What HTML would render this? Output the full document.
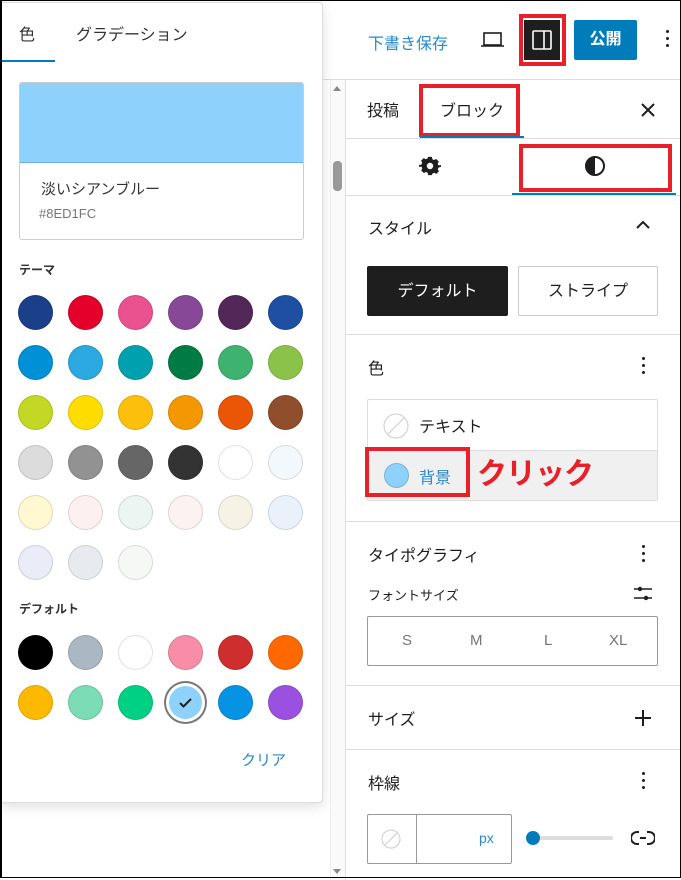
<!DOCTYPE html>
<html><head><meta charset="utf-8">
<style>
*{box-sizing:border-box;margin:0;padding:0}
body{width:681px;height:880px;position:relative;overflow:hidden;background:#fff;font-family:"Liberation Sans","Noto Sans CJK JP",sans-serif;color:#1e1e1e}
.a{position:absolute}
.c{position:absolute;width:35px;height:35px;border-radius:50%;box-shadow:inset 0 0 0 1px rgba(0,0,0,.12)}
.hr{position:absolute;left:346px;width:334px;height:1px;background:#ddd}
.red{position:absolute;border:4px solid #e8202a}
.dots{position:absolute;width:4px}
.dots i{display:block;width:3px;height:3px;background:#1e1e1e;border-radius:50%;margin-bottom:4px}
</style></head><body>
<div class="a" style="left:0;top:0;width:681px;height:878px;border:1px solid #000;border-left:2px solid #000;z-index:50"></div>
<div class="a" style="left:0;top:80px;width:330px;height:800px;background:#fff"></div>
<div class="a" style="left:330px;top:80px;width:16px;height:800px;background:#fafafa;border-left:1px solid #eee;border-right:1px solid #ddd"></div>
<div class="a" style="left:333px;top:86px;width:0;height:0;border-left:4px solid transparent;border-right:4px solid transparent;border-bottom:5px solid #888"></div>
<div class="a" style="left:333px;top:161px;width:9px;height:30px;background:#999;border-radius:4px"></div>
<div class="a" style="left:333px;top:869px;width:0;height:0;border-left:4px solid transparent;border-right:4px solid transparent;border-top:5px solid #888"></div>
<div class="a" style="left:323px;top:79px;width:358px;height:1px;background:#ddd"></div>
<div class="a" style="left:368px;top:30px;font-size:16px;color:#2a8ac8">下書き保存</div>
<svg class="a" style="left:480px;top:29px" width="26" height="22" viewBox="0 0 26 22"><rect x="4" y="4" width="17" height="12" fill="none" stroke="#1e1e1e" stroke-width="1.6"/><line x1="1" y1="17" x2="24" y2="17" stroke="#1e1e1e" stroke-width="1.6"/></svg>
<div class="a" style="left:524px;top:20px;width:36px;height:40px;background:#1e1e1e"></div>
<svg class="a" style="left:531px;top:29px" width="22" height="22" viewBox="0 0 22 22"><rect x="2" y="2" width="18" height="18" fill="none" stroke="#fff" stroke-width="1.6" rx="1"/><line x1="13" y1="2" x2="13" y2="20" stroke="#fff" stroke-width="1.6"/></svg>
<div class="red" style="left:519px;top:14px;width:47px;height:52px"></div>
<div class="a" style="left:574px;top:20px;width:63px;height:40px;background:#007cba;border-radius:2px;color:#fff;font-size:16px;font-weight:bold;text-align:center;line-height:40px">公開</div>
<div class="dots" style="left:666px;top:30px"><i></i><i></i><i></i></div>
<div class="a" style="left:367px;top:97px;font-size:16px">投稿</div>
<div class="a" style="left:440px;top:97px;font-size:16px">ブロック</div>
<div class="red" style="left:419px;top:84px;width:101px;height:53px"></div>
<div class="a" style="left:420px;top:136px;width:104px;height:2px;background:#007cba"></div>
<svg class="a" style="left:640px;top:102px" width="16" height="16" viewBox="0 0 16 16"><path d="M2 2L14 14M14 2L2 14" stroke="#1e1e1e" stroke-width="2"/></svg>
<div class="hr" style="top:138px"></div>
<svg class="a" style="left:419px;top:155px" width="22" height="22" viewBox="0 0 24 24"><path fill="#1e1e1e" d="M10 2h4l.6 2.6 1.8.9 2.4-1.2 2.8 2.8-1.2 2.4.9 1.8L24 11v2l-2.6.6-.9 1.8 1.2 2.4-2.8 2.8-2.4-1.2-1.8.9L14 22h-4l-.6-2.6-1.8-.9-2.4 1.200-2.8-2.8 1.2-2.4-.9-1.8L0 13v-2l2.6-.6.9-1.8-1.2-2.4 2.8-2.8 2.4 1.2 1.8-.9z M12 8.5a3.5 3.5 0 1 0 0 7a3.5 3.5 0 1 0 0-7z" fill-rule="evenodd"/></svg>
<svg class="a" style="left:584px;top:155px" width="22" height="22" viewBox="0 0 22 22"><circle cx="11" cy="11" r="9" fill="none" stroke="#1e1e1e" stroke-width="2"/><path d="M11 2a9 9 0 0 0 0 18z" fill="#1e1e1e"/></svg>
<div class="red" style="left:519px;top:144px;width:153px;height:48px"></div>
<div class="a" style="left:512px;top:193px;width:164px;height:2px;background:#007cba"></div>
<div class="hr" style="top:195px"></div>
<div class="a" style="left:368px;top:215px;font-size:16px">スタイル</div>
<svg class="a" style="left:635px;top:219px" width="16" height="12" viewBox="0 0 16 12"><path d="M2 9L8 3L14 9" fill="none" stroke="#1e1e1e" stroke-width="2"/></svg>
<div class="a" style="left:367px;top:266px;width:141px;height:50px;background:#1e1e1e;border-radius:2px;color:#fff;font-size:16px;text-align:center;line-height:52px">デフォルト</div>
<div class="a" style="left:518px;top:266px;width:140px;height:50px;border:1px solid #ccc;border-radius:2px;font-size:16px;text-align:center;line-height:50px">ストライプ</div>
<div class="hr" style="top:334px"></div>
<div class="a" style="left:368px;top:355px;font-size:16px">色</div>
<div class="dots" style="left:642px;top:357px"><i></i><i></i><i></i></div>
<div class="a" style="left:367px;top:399px;width:291px;height:102px;border:1px solid #ddd;border-radius:2px"></div>
<div class="a" style="left:368px;top:450px;width:289px;height:50px;background:#f0f0f0;border-top:1px solid #ddd"></div>
<svg class="a" style="left:383px;top:413px" width="26" height="26" viewBox="0 0 26 26"><circle cx="13" cy="13" r="12" fill="#fff" stroke="#ccc"/><line x1="5" y1="21" x2="21" y2="5" stroke="#ccc"/></svg>
<div class="a" style="left:419px;top:413px;font-size:16px">テキスト</div>
<div class="a" style="left:384px;top:463px;width:25px;height:25px;border-radius:50%;background:#8ed1fc;box-shadow:inset 0 0 0 1px rgba(0,0,0,.15)"></div>
<div class="a" style="left:419px;top:464px;font-size:16px;color:#2a8ac8">背景</div>
<div class="red" style="left:365px;top:447px;width:105px;height:50px"></div>
<div class="a" style="left:477px;top:449px;font-size:30px;font-weight:bold;color:#e8202a;letter-spacing:-1px">クリック</div>
<div class="hr" style="top:521px"></div>
<div class="a" style="left:368px;top:542px;font-size:16px">タイポグラフィ</div>
<div class="dots" style="left:642px;top:545px"><i></i><i></i><i></i></div>
<div class="a" style="left:368px;top:585px;font-size:13px">フォントサイズ</div>
<svg class="a" style="left:633px;top:585px" width="20" height="18" viewBox="0 0 20 18"><line x1="1" y1="4" x2="19" y2="4" stroke="#1e1e1e" stroke-width="1.5"/><line x1="1" y1="13" x2="19" y2="13" stroke="#1e1e1e" stroke-width="1.5"/><circle cx="7" cy="4" r="2.2" fill="#1e1e1e"/><circle cx="13" cy="13" r="2.2" fill="#1e1e1e"/></svg>
<div class="a" style="left:367px;top:616px;width:291px;height:50px;border:1px solid #999;border-radius:2px;font-size:15px;color:#757575">
<span class="a" style="left:34px;top:15px">S</span><span class="a" style="left:102px;top:15px">M</span><span class="a" style="left:176px;top:15px">L</span><span class="a" style="left:241px;top:15px">XL</span></div>
<div class="hr" style="top:685px"></div>
<div class="a" style="left:368px;top:706px;font-size:16px">サイズ</div>
<svg class="a" style="left:634px;top:709px" width="18" height="18" viewBox="0 0 18 18"><path d="M9 1V17M1 9H17" stroke="#1e1e1e" stroke-width="2"/></svg>
<div class="hr" style="top:749px"></div>
<div class="a" style="left:368px;top:770px;font-size:16px">枠線</div>
<div class="dots" style="left:642px;top:772px"><i></i><i></i><i></i></div>
<div class="a" style="left:367px;top:814px;width:145px;height:50px;border:1px solid #999;border-radius:2px"></div>
<div class="a" style="left:416px;top:814px;width:1px;height:50px;background:#999"></div>
<svg class="a" style="left:381px;top:829px" width="20" height="20" viewBox="0 0 20 20"><circle cx="10" cy="10" r="9" fill="none" stroke="#ccc"/><line x1="4" y1="16" x2="16" y2="4" stroke="#ccc"/></svg>
<div class="a" style="left:479px;top:830px;font-size:14px;color:#2a8ac8">px</div>
<div class="a" style="left:530px;top:836px;width:83px;height:4px;background:#ddd;border-radius:2px"></div>
<div class="a" style="left:526px;top:831px;width:14px;height:14px;border-radius:50%;background:#007cba"></div>
<svg class="a" style="left:631px;top:829px" width="24" height="18" viewBox="0 0 24 18"><path d="M8 3H6a6 6 0 0 0 0 12h2M16 3h2a6 6 0 0 1 0 12h-2M9 9h6" fill="none" stroke="#1e1e1e" stroke-width="2"/></svg>
<div class="a" style="left:0;top:2px;width:323px;height:801px;background:#fff;border:1px solid #ddd;border-radius:0 4px 4px 0;box-shadow:0 4px 12px rgba(0,0,0,.12);z-index:5">
<div class="a" style="left:18px;top:18px;font-size:16px;color:#333">色</div>
<div class="a" style="left:75px;top:18px;font-size:16px;color:#333">グラデーション</div>
<div class="a" style="left:0;top:57px;width:54px;height:2px;background:#007cba"></div>
<div class="a" style="left:18px;top:79px;width:285px;height:158px;border:1px solid #ccc;border-radius:3px;overflow:hidden">
<div style="height:80px;background:#8ed1fc;border-bottom:1px solid #6ab0e0"></div>
<div class="a" style="left:21px;top:95px;font-size:15px;color:#333">淡いシアンブルー</div>
<div class="a" style="left:19px;top:123px;font-size:13px;color:#777">#8ED1FC</div>
</div>
<div class="a" style="left:18px;top:258px;font-size:12px;font-weight:bold;color:#333">テーマ</div>
<div class="a" style="left:18px;top:597px;font-size:12px;font-weight:bold;color:#333">デフォルト</div>
<div class="a" style="left:240px;top:746px;font-size:15px;color:#2a8ac8">クリア</div>
</div>
<div id="sw" style="position:absolute;left:0;top:0;z-index:6"></div>
<script>
var rows=[
["#1b3f88","#e4002b","#e9528e","#884898","#532758","#1d50a2"],
["#0090d6","#2ca9e1","#00a0af","#007b43","#3eb370","#8bc34a"],
["#c3d825","#ffdc00","#fcc00c","#f39800","#ea5506","#8f4e2c"],
["#dcdcdc","#929292","#666666","#333333","#ffffff","#f2f8fc"],
["#fff8d1","#fcf1f0","#ebf6f2","#fdf2f2","#f6f3e6","#e9f2fb"],
["#eaecf7","#e7ebef","#f6f8f6"],
null,
["#000000","#abb8c3","#ffffff","#f78da7","#cf2e2e","#ff6900"],
["#fcb900","#7bdcb5","#00d084","#8ed1fc","#0693e3","#9b51e0"]];
var ys=[295,345,395,445,495,545,0,635,685],h="";
rows.forEach(function(r,i){if(!r)return;r.forEach(function(c,j){
var x=18+j*50,y=ys[i];
if(i==8&&j==3){h+='<div class="c" style="left:'+(x-4)+'px;top:'+(y-4)+'px;width:43px;height:43px;background:#fff;box-shadow:inset 0 0 0 2px #777"></div><div class="c" style="left:'+(x+1)+'px;top:'+(y+1)+'px;width:33px;height:33px;background:'+c+';box-shadow:none"></div><svg style="position:absolute;left:'+(x+8)+'px;top:'+(y+8)+'px" width="19" height="19" viewBox="0 0 19 19"><path d="M4 10l3.5 3.5L15 6" fill="none" stroke="#1e1e1e" stroke-width="2"/></svg>';}
else h+='<div class="c" style="left:'+x+'px;top:'+y+'px;background:'+c+'"></div>';});});
document.getElementById('sw').innerHTML=h;
</script>
</body></html>
